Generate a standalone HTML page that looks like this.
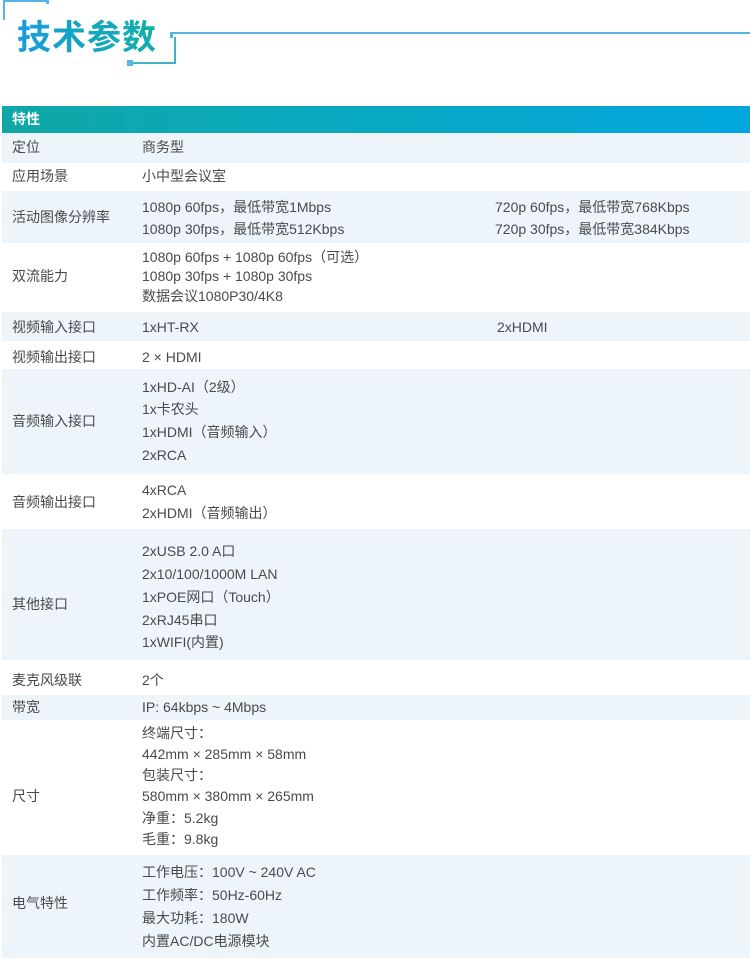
<!DOCTYPE html>
<html><head><meta charset="utf-8">
<style>
*{margin:0;padding:0;box-sizing:border-box}
body{width:750px;height:963px;background:#fff;position:relative;overflow:hidden;font-family:"Liberation Sans","Noto Sans CJK SC",sans-serif;color:#4a4a4a;font-size:14px}
.ln{position:absolute;background:#55b6e6}
.title{position:absolute;left:17px;top:14px;font-size:34px;font-weight:bold;letter-spacing:1px;background:linear-gradient(90deg,#1a9bdc,#11b0a8);-webkit-background-clip:text;background-clip:text;color:transparent;line-height:42px;font-family:"Noto Sans CJK SC",sans-serif}
.hdr{position:absolute;left:2px;top:106px;width:748px;height:27px;background:linear-gradient(90deg,#0fa8a6,#02a7df);color:#fff;font-weight:bold;font-size:14px;line-height:27px;padding-left:10px}
.row{position:absolute;left:2px;width:748px}
.b{background:#edf5fb}
.t{position:absolute;white-space:nowrap;line-height:16px}
</style></head><body>
<div class="ln" style="left:3px;top:0;width:2px;height:20px"></div>
<div class="ln" style="left:3px;top:0;width:46px;height:2px"></div>
<div class="ln" style="left:46px;top:0;width:3px;height:4px"></div>
<div class="title">技术参数</div>
<div class="ln" style="left:170px;top:32px;width:580px;height:2px"></div>
<div class="ln" style="left:170px;top:32px;width:3px;height:6px"></div>
<div class="ln" style="left:174px;top:37px;width:2px;height:27px;background:#3fb3c8"></div>
<div class="ln" style="left:128px;top:62px;width:48px;height:2px;background:#3fb3c8"></div>
<div class="ln" style="left:127px;top:60px;width:6px;height:6px"></div>

<div class="hdr">特性</div>
<div class="row b" style="top:133px;height:30px"></div>
<div class="row b" style="top:191px;height:52px"></div>
<div class="row b" style="top:312px;height:29px"></div>
<div class="row b" style="top:369px;height:105px"></div>
<div class="row b" style="top:529px;height:131px"></div>
<div class="row b" style="top:695px;height:25px"></div>
<div class="row b" style="top:855px;height:103px"></div>

<div class="t" style="left:12px;top:139px">定位</div>
<div class="t" style="left:142px;top:139px">商务型</div>
<div class="t" style="left:12px;top:168px">应用场景</div>
<div class="t" style="left:142px;top:168px">小中型会议室</div>
<div class="t" style="left:12px;top:209px">活动图像分辨率</div>
<div class="t" style="left:142px;top:199px">1080p 60fps，最低带宽1Mbps</div>
<div class="t" style="left:142px;top:221px">1080p 30fps，最低带宽512Kbps</div>
<div class="t" style="left:495px;top:199px">720p 60fps，最低带宽768Kbps</div>
<div class="t" style="left:495px;top:221px">720p 30fps，最低带宽384Kbps</div>
<div class="t" style="left:12px;top:268px">双流能力</div>
<div class="t" style="left:142px;top:249px">1080p 60fps + 1080p 60fps（可选）</div>
<div class="t" style="left:142px;top:268px">1080p 30fps + 1080p 30fps</div>
<div class="t" style="left:142px;top:288px">数据会议1080P30/4K8</div>
<div class="t" style="left:12px;top:319px">视频输入接口</div>
<div class="t" style="left:142px;top:319px">1xHT-RX</div>
<div class="t" style="left:497px;top:319px">2xHDMI</div>
<div class="t" style="left:12px;top:349px">视频输出接口</div>
<div class="t" style="left:142px;top:349px">2 × HDMI</div>
<div class="t" style="left:12px;top:413px">音频输入接口</div>
<div class="t" style="left:142px;top:379px">1xHD-AI（2级）</div>
<div class="t" style="left:142px;top:401px">1x卡农头</div>
<div class="t" style="left:142px;top:424px">1xHDMI（音频输入）</div>
<div class="t" style="left:142px;top:447px">2xRCA</div>
<div class="t" style="left:12px;top:494px">音频输出接口</div>
<div class="t" style="left:142px;top:482px">4xRCA</div>
<div class="t" style="left:142px;top:505px">2xHDMI（音频输出）</div>
<div class="t" style="left:12px;top:596px">其他接口</div>
<div class="t" style="left:142px;top:543px">2xUSB 2.0 A口</div>
<div class="t" style="left:142px;top:566px">2x10/100/1000M LAN</div>
<div class="t" style="left:142px;top:589px">1xPOE网口（Touch）</div>
<div class="t" style="left:142px;top:612px">2xRJ45串口</div>
<div class="t" style="left:142px;top:634px">1xWIFI(内置)</div>
<div class="t" style="left:12px;top:672px">麦克风级联</div>
<div class="t" style="left:142px;top:672px">2个</div>
<div class="t" style="left:12px;top:699px">带宽</div>
<div class="t" style="left:142px;top:699px">IP: 64kbps ~ 4Mbps</div>
<div class="t" style="left:12px;top:788px">尺寸</div>
<div class="t" style="left:142px;top:725px">终端尺寸：</div>
<div class="t" style="left:142px;top:746px">442mm × 285mm × 58mm</div>
<div class="t" style="left:142px;top:767px">包装尺寸：</div>
<div class="t" style="left:142px;top:788px">580mm × 380mm × 265mm</div>
<div class="t" style="left:142px;top:810px">净重：5.2kg</div>
<div class="t" style="left:142px;top:831px">毛重：9.8kg</div>
<div class="t" style="left:12px;top:895px">电气特性</div>
<div class="t" style="left:142px;top:864px">工作电压：100V ~ 240V AC</div>
<div class="t" style="left:142px;top:887px">工作频率：50Hz-60Hz</div>
<div class="t" style="left:142px;top:910px">最大功耗：180W</div>
<div class="t" style="left:142px;top:933px">内置AC/DC电源模块</div>
</body></html>
